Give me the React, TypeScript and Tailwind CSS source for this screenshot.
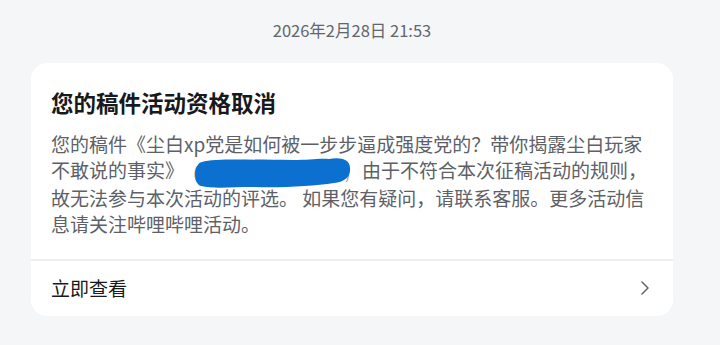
import React from 'react';

const font = { fontFamily: '"Noto Sans CJK SC", "Noto Sans", sans-serif' };

function Redaction() {
  return (
    <svg
      width="158"
      height="32"
      viewBox="0 0 158 32"
      className="inline-block align-middle -my-[4px] ml-[9px] mr-[11px]"
    >
      <text x="0" y="22" fontSize="16" fill="#9499a0">(</text>
      <text x="152" y="22" fontSize="16" fill="#9499a0">)</text>
      <path
        d="M9,5 C22,1 60,3 100,3 C116,3 126,1 136,2 C147,0 157,2 157,11 C158,20 151,25 141,26 C120,29 90,31 60,30 C40,30 20,32 8,29 C0,27 0,7 9,5 Z"
        fill="#0b70cf"
      />
    </svg>
  );
}

export default function App() {
  return (
    <div className="min-h-[345px] bg-[#f5f6f8] pt-[18px]" style={font}>
      <div className="w-[642px] ml-[31px]">
        {/* Time stamp */}
        <div className="text-center text-[16.5px] leading-[24px] text-[#61666d]">
          2026年2月28日 21:53
        </div>

        {/* Notice card */}
        <div className="mt-[21px] bg-white rounded-2xl overflow-hidden">
          <div className="px-[20px] pt-[24px] pb-[22px]">
            <h2 className="text-[22.5px] leading-[30px] font-bold text-[#18191c]">
              您的稿件活动资格取消
            </h2>
            <p className="mt-[14px] text-[19px] leading-[26px] text-[#5d6167] whitespace-nowrap">
              您的稿件《尘白xp党是如何被一步步逼成强度党的？带你揭露尘白玩家
              <br />
              不敢说的事实》
              <Redaction />
              由于不符合本次征稿活动的规则，
              <br />
              故无法参与本次活动的评选。 如果您有疑问，请联系客服。更多活动信
              <br />
              息请关注哔哩哔哩活动。
            </p>
          </div>
          <div className="border-t-2 border-[#eceef0] h-[57px] flex items-center justify-between pl-[20px] pr-[23px]">
            <span className="text-[19px] text-[#18191c]">立即查看</span>
            <svg width="10" height="16" viewBox="0 0 10 16" fill="none">
              <path d="M2 2 L8 8 L2 14" stroke="#61666d" strokeWidth="1.5" strokeLinecap="round" strokeLinejoin="round" />
            </svg>
          </div>
        </div>
      </div>
    </div>
  );
}
